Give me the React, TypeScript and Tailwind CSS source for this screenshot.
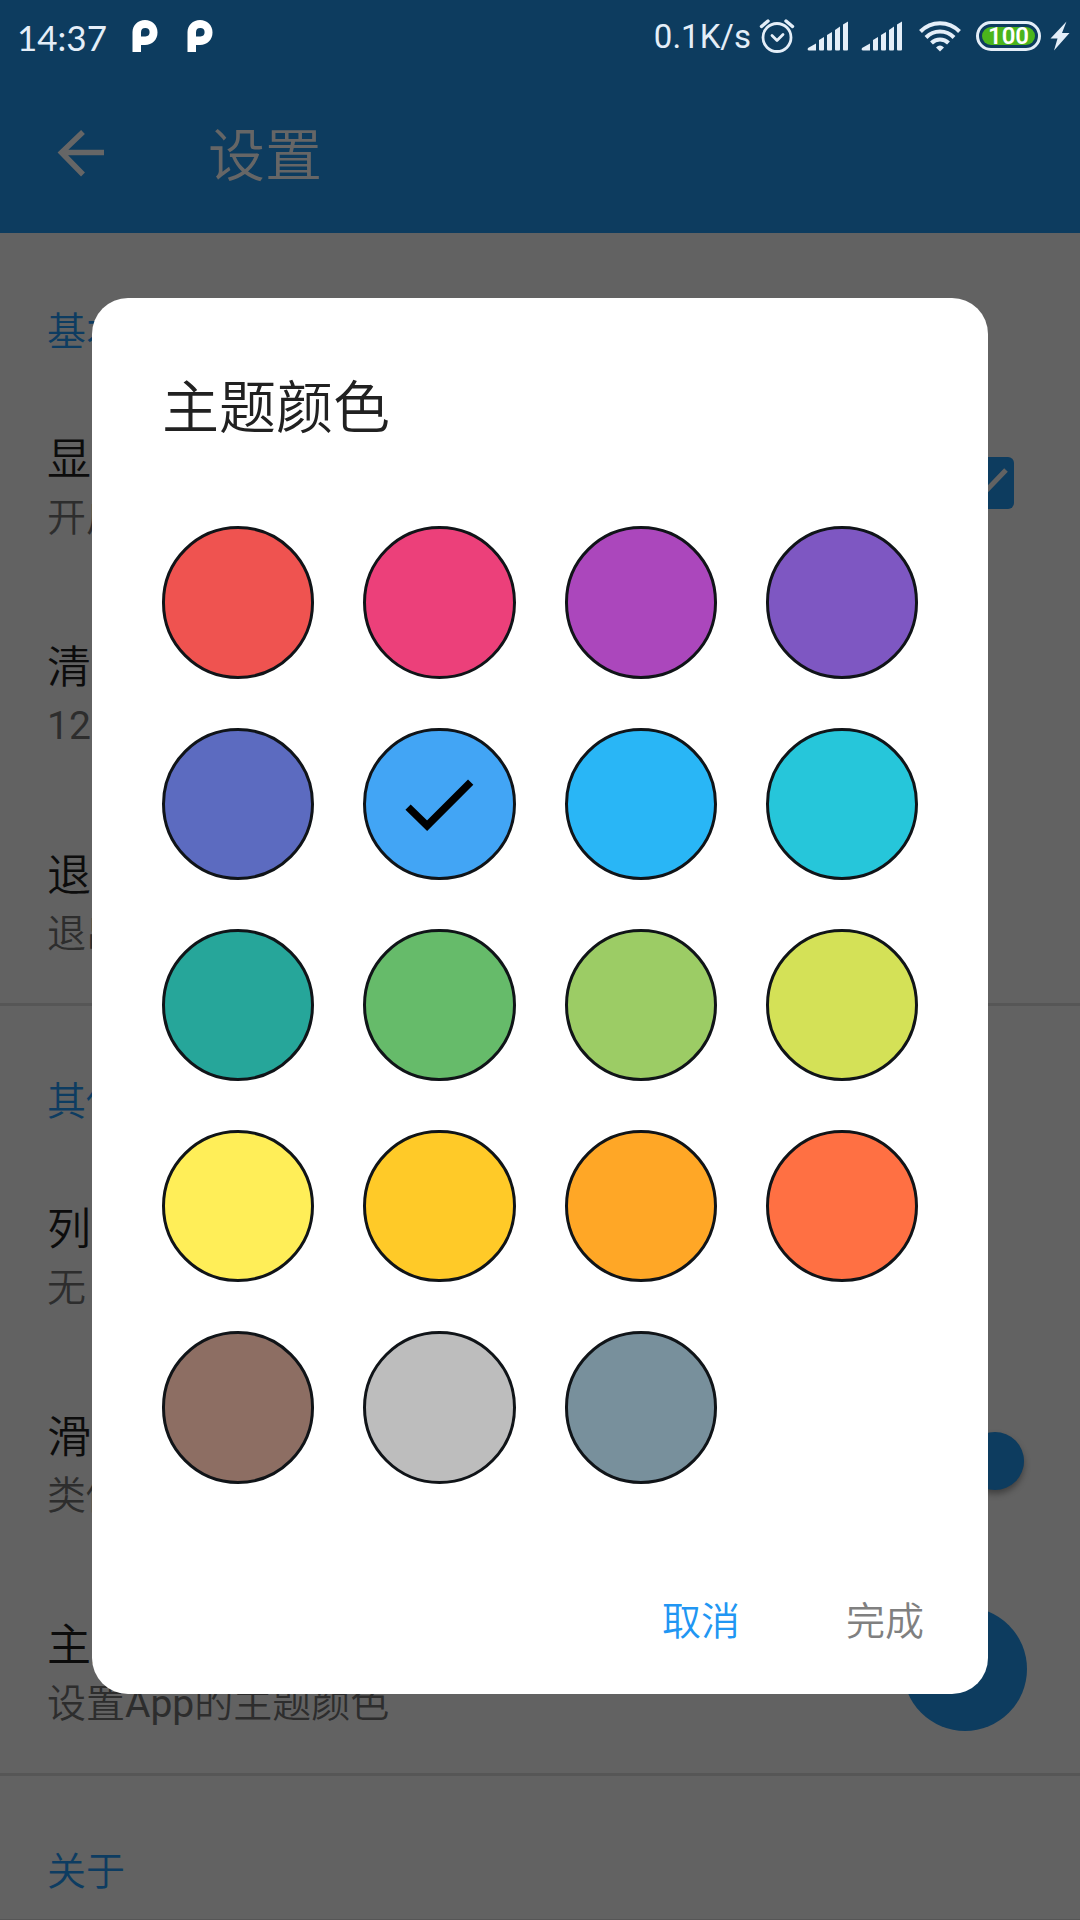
import type { ReactNode } from 'react';

const SWATCHES = [
  ['红色', '#ef5350'],
  ['粉色', '#ec407a'],
  ['紫色', '#ab47bc'],
  ['深紫', '#7e57c2'],
  ['靛蓝', '#5c6bc0'],
  ['蓝色', '#42a5f5'],
  ['浅蓝', '#29b6f6'],
  ['青色', '#26c6da'],
  ['蓝绿', '#26a69a'],
  ['绿色', '#66bb6a'],
  ['浅绿', '#9ccc65'],
  ['黄绿', '#d4e157'],
  ['黄色', '#ffee58'],
  ['琥珀', '#ffca28'],
  ['橙色', '#ffa726'],
  ['深橙', '#ff7043'],
  ['棕色', '#8d6e63'],
  ['灰色', '#bdbdbd'],
  ['蓝灰', '#78909c'],
];

function NotificationIcon() {
  return (
    <svg width="26" height="34" viewBox="0 0 26 34" fill="#ffffff" aria-hidden="true">
      <path
        fillRule="evenodd"
        d="M0.500 33V13C0.500 6 6 1 13 1s12.500 5 12.500 12.500S20 26 13 26H9v7zM9 17.500h4.500a4.300 4.300 0 1 0-4.500-4.300z"
      />
    </svg>
  );
}

function AlarmIcon() {
  return (
    <svg width="36" height="36" viewBox="0 0 36 36" fill="none" stroke="#e4eef8" strokeLinecap="round" aria-hidden="true">
      <circle cx="18" cy="19.500" r="14" strokeWidth="2.800" />
      <path d="M2.500 8.500 9 3M33.500 8.500 27 3" strokeWidth="3.400" />
      <path d="M13 17.500l5 5 6-6" strokeWidth="2.800" strokeLinejoin="round" />
    </svg>
  );
}

function SignalIcon() {
  return (
    <svg width="42" height="30" viewBox="0 0 42 30" fill="#e4eef8" aria-hidden="true">
      <path d="M1 27 9 22.500v7H2Q0 29.500 1 27z" />
      <path d="M12 19l5-3v12.500q0 1-1 1h-3q-1 0-1-1z" />
      <path d="M20 14l5-3v17.500q0 1-1 1h-3q-1 0-1-1z" />
      <path d="M28 9l5-3.500v23q0 1-1 1h-3q-1 0-1-1z" />
      <path d="M36 3.500 41 .5v28q0 1-1 1h-3q-1 0-1-1z" />
    </svg>
  );
}

function WifiIcon() {
  return (
    <svg width="42" height="32" viewBox="0 0 42 32" fill="none" stroke="#e4eef8" strokeWidth="4" aria-hidden="true">
      <path d="M1.500 11.500a27 27 0 0 1 39 0" />
      <path d="M7 17.500a19.500 19.500 0 0 1 28 0" />
      <path d="M12.500 23a12 12 0 0 1 17 0" />
      <path d="M21 31.500l-4-4q4-4 8 0z" fill="#e4eef8" stroke="none" />
    </svg>
  );
}

function BoltIcon() {
  return (
    <svg width="20" height="30" viewBox="0 0 20 30" fill="#e4eef8" aria-hidden="true">
      <path d="M16.500.5.500 17.500h7L4 29.500 19.500 12h-7.500z" />
    </svg>
  );
}

function StatusBar() {
  return (
    <div className="flex h-[72px] items-center justify-between pr-[10px] pl-[17px] font-normal text-[#e4eef8]">
      <div className="flex items-center">
        <span className="pt-[2px] font-['Lato',sans-serif] text-[35px] leading-[40px]">14:37</span>
        <div className="flex items-center gap-[29px] pl-[25px]">
          <NotificationIcon />
          <NotificationIcon />
        </div>
      </div>
      <div className="flex items-center">
        <span className="pt-[2px] pr-[8px] font-['Roboto',sans-serif] text-[33px] leading-[40px]">0.1K/s</span>
        <AlarmIcon />
        <div className="flex gap-3 pr-[16px] pl-3">
          <SignalIcon />
          <SignalIcon />
        </div>
        <WifiIcon />
        <div className="ml-[15px] flex h-[30px] w-[65px] rounded-full border-3 border-[#e4eef8] p-[3px]">
          <span className="flex grow items-center justify-center rounded-full bg-[#4bb51c] font-['Roboto',sans-serif] text-[24px] leading-none font-semibold text-white">
            100
          </span>
        </div>
        <div className="pl-[9px]">
          <BoltIcon />
        </div>
      </div>
    </div>
  );
}

function Section({ title, children }: { title: string; children?: ReactNode }) {
  return (
    <section className="border-b-3 border-[#565656]">
      <h2 className="px-[47px] pt-[67px] pb-[18px] text-[39px] leading-[58px] text-[#0d3c61]">{title}</h2>
      {children}
    </section>
  );
}

function Row({ id, title, note, control }: { id: string; title: string; note: string; control?: ReactNode }) {
  return (
    <div className="flex h-[208px] items-center justify-between pl-[47px]">
      <label htmlFor={id} className="block pt-[9px]">
        <span className="block text-[44px] leading-[60px] text-[#0c0c0c]">{title}</span>
        <span className="block text-[39px] leading-[56px] font-normal text-[#2d2d2d]">{note}</span>
      </label>
      {control}
    </div>
  );
}

function SettingsPage() {
  return (
    <>
      <header className="bg-[#0d3c5f]">
        <StatusBar />
        <div className="flex h-[161px] items-center pl-[53px]">
          <button type="button" aria-label="返回">
            <svg width="56" height="56" viewBox="0 0 56 56" fill="none" stroke="#666666" strokeWidth="5.500" aria-hidden="true">
              <path d="M51 27.500H9M30 7 8.500 27.500 30 49.500" />
            </svg>
          </button>
          <h1 className="pt-[8px] pl-[99px] text-[57px] leading-[80px] text-[#666666]">设置</h1>
        </div>
      </header>
      <main className="pt-[3px]">
        <Section title="基本">
          <Row
            id="show"
            title="显示图片"
            note="开启后显示图片"
            control={
              <span className="relative mr-[66px] size-[52px]">
                <input id="show" type="checkbox" defaultChecked className="block size-full appearance-none rounded-md bg-[#0d3c5f]" />
                <svg className="pointer-events-none absolute inset-0" viewBox="0 0 52 52" fill="none" stroke="#626262" strokeWidth="5" aria-hidden="true">
                  <path d="M8 26l12 12 24-25" />
                </svg>
              </span>
            }
          />
          <Row id="clear" title="清除缓存" note="12.5MB" />
          <Row id="logout" title="退出登录" note="退出当前账号" />
        </Section>
        <Section title="其他">
          <Row id="list" title="列表动画" note="无" />
          <Row
            id="swipe"
            title="滑动返回"
            note="类似系统手势"
            control={
              <span className="relative mr-[56px] flex h-[58px] w-[110px] items-center justify-end">
                <input id="swipe" type="checkbox" role="switch" defaultChecked className="h-9 w-[90px] appearance-none rounded-full bg-[#365066]" />
                <span className="pointer-events-none absolute right-0 size-[58px] rounded-full bg-[#0d3c5f] shadow-[0_4px_6px_rgba(0,0,0,0.35)]" />
              </span>
            }
          />
          <Row
            id="theme"
            title="主题颜色"
            note="设置App的主题颜色"
            control={<button id="theme" type="button" aria-label="主题颜色" className="mr-[53px] size-[124px] rounded-full bg-[#0d3c5f]" />}
          />
        </Section>
        <Section title="关于" />
      </main>
    </>
  );
}

function ThemeDialog() {
  return (
    <div className="fixed inset-0 flex items-center justify-center px-[92px] pt-[72px]">
      <form role="dialog" aria-labelledby="dialog-title" className="w-full rounded-[36px] bg-white pt-[71px]">
        <h2 id="dialog-title" className="px-[70px] text-[57px] leading-[80px] text-[#212121]">
          主题颜色
        </h2>
        <div className="grid grid-cols-4 gap-[49px] px-[70px] pt-[77px]">
          {SWATCHES.map(([name, color]) => (
            <label key={name} className="relative block aspect-square">
              <input
                type="radio"
                name="theme-color"
                aria-label={name}
                defaultChecked={name === '蓝色'}
                className="peer block size-full appearance-none rounded-full border-3 border-[#101418]"
                style={{ backgroundColor: color }}
              />
              <svg
                className="pointer-events-none absolute inset-0 hidden peer-checked:block"
                viewBox="0 0 152 152"
                fill="none"
                stroke="#000000"
                strokeWidth="7.500"
                aria-hidden="true"
              >
                <path d="M45 79 64 97.500 107.500 54" />
              </svg>
            </label>
          ))}
        </div>
        <div className="flex justify-end gap-[106px] pt-[109px] pr-[64px] pb-[43px] text-[39px] leading-[58px]">
          <button type="button" className="text-[#2196f3]">
            取消
          </button>
          <button type="submit" className="text-[#808080]">
            完成
          </button>
        </div>
      </form>
    </div>
  );
}

export default function App() {
  return (
    <div className="h-screen overflow-hidden bg-[#626262] font-['Roboto','Noto_Sans_CJK_SC_DemiLight','Noto_Sans_CJK_SC',sans-serif] font-[350]" lang="zh-CN">
      <SettingsPage />
      <ThemeDialog />
    </div>
  );
}
